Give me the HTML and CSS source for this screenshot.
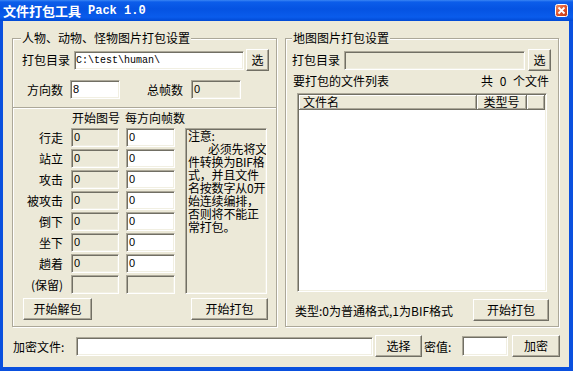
FILE: index.html
```html
<!DOCTYPE html>
<html lang="zh-CN">
<head>
    <meta charset="UTF-8">
    <title>文件打包工具 Pack 1.0</title>
    <link rel="stylesheet" href="styles.css">
</head>
<body>
<div class="window">
    <!-- title bar -->
    <div class="titlebar">
        <span class="title-cn">文件打包工具</span><span class="title-en">Pack 1.0</span>
        <span class="close-btn">
            <svg width="13" height="13" viewBox="0 0 13 13">
                <defs>
                    <linearGradient id="cg" x1="0" y1="0" x2="1" y2="1">
                        <stop offset="0" stop-color="#F0946E"/>
                        <stop offset="0.5" stop-color="#E0532B"/>
                        <stop offset="1" stop-color="#C13A12"/>
                    </linearGradient>
                </defs>
                <rect x="0.5" y="0.5" width="12" height="12" rx="2" fill="url(#cg)" stroke="#fff"/>
                <path d="M3.5 3.5 L9.5 9.5 M9.5 3.5 L3.5 9.5" stroke="#fff" stroke-width="1.8"/>
            </svg>
        </span>
    </div>

    <div class="client">
        <div class="groups">
            <!-- characters / animals / monsters -->
            <div class="group group-left">
                <div class="legend">人物、动物、怪物图片打包设置</div>
                <div class="row row-dir">
                    <span class="label">打包目录</span>
                    <div class="edit edit-path">C:\test\human\</div>
                    <button class="btn btn-pick">选</button>
                </div>
                <div class="row row-count">
                    <span class="label lbl-dirs">方向数</span>
                    <div class="edit edit-num">8</div>
                    <span class="label lbl-total">总帧数</span>
                    <div class="edit edit-num disabled">0</div>
                </div>
                <div class="sep"></div>
                <div class="frames">
                    <span class="head head-start">开始图号</span>
                    <span class="head head-count">每方向帧数</span>

                    <span class="act">行走</span><div class="edit disabled">0</div><div class="edit">0</div>
                    <span class="act">站立</span><div class="edit disabled">0</div><div class="edit">0</div>
                    <span class="act">攻击</span><div class="edit disabled">0</div><div class="edit">0</div>
                    <span class="act">被攻击</span><div class="edit disabled">0</div><div class="edit">0</div>
                    <span class="act">倒下</span><div class="edit disabled">0</div><div class="edit">0</div>
                    <span class="act">坐下</span><div class="edit disabled">0</div><div class="edit">0</div>
                    <span class="act">趟着</span><div class="edit disabled">0</div><div class="edit">0</div>
                    <span class="act">(保留)</span><div class="edit disabled"></div><div class="edit disabled"></div>

                    <p class="note">注意:<br><span class="indent"></span>必须先将文<br>件转换为BIF格<br>式，并且文件<br>名按数字从0开<br>始连续编排，<br>否则将不能正<br>常打包。</p>
                </div>
                <div class="group-buttons">
                    <button class="btn btn-unpack">开始解包</button>
                    <button class="btn btn-pack">开始打包</button>
                </div>
            </div>

            <!-- map pictures -->
            <div class="group group-right">
                <div class="legend">地图图片打包设置</div>
                <div class="row row-dir">
                    <span class="label">打包目录</span>
                    <div class="edit edit-map disabled"></div>
                    <button class="btn btn-pick">选</button>
                </div>
                <div class="list-head">
                    <span>要打包的文件列表</span>
                    <span class="count">共 0 个文件</span>
                </div>
                <div class="listbox">
                    <div class="list-cols">
                        <div class="hcell hcell-name">文件名</div>
                        <div class="hcell hcell-type">类型号</div>
                        <div class="hcell hcell-rest"></div>
                    </div>
                </div>
                <div class="group-foot">
                    <span class="hint">类型:0为普通格式,1为BIF格式</span>
                    <button class="btn btn-pack-map">开始打包</button>
                </div>
            </div>
        </div>

        <!-- encryption -->
        <div class="bottom">
            <span class="label lbl-file">加密文件:</span>
            <div class="edit edit-file"></div>
            <button class="btn btn-choose">选择</button>
            <span class="label lbl-key">密值:</span>
            <div class="edit edit-key"></div>
            <button class="btn btn-encrypt">加密</button>
        </div>
    </div>
</div>
</body>
</html>
```

FILE: styles.css
```css
body {
    margin: 0;
    font-family: "Noto Sans CJK SC", sans-serif;
    font-size: 12px;
    color: #000;
}
.window {
    width: 573px;
    height: 371px;
    background: #0A50DE;
    display: flex;
    flex-direction: column;
}
.titlebar {
    flex: none;
    height: 21px;
    display: flex;
    align-items: center;
    padding: 0 5px 0 3px;
    background: linear-gradient(#3A86F4 0, #0C5DEA 2px, #0553E2 9px, #0A5CEC 17px, #0049D4 21px);
    color: #fff;
    font-weight: bold;
    white-space: nowrap;
}
.title-cn {
    font-size: 13px;
    line-height: 21px;
}
.title-en {
    font-family: "Liberation Mono", monospace;
    font-size: 12px;
    margin-left: 7px;
}
.close-btn {
    margin-left: auto;
    width: 13px;
    height: 13px;
    display: flex;
}
.client {
    flex: 1;
    margin: 0 4px 4px 3px;
    background: #ECE9D8;
    padding: 17px 0 0 9px;
}
.groups {
    display: flex;
    gap: 8px;
}
.group {
    box-sizing: border-box;
    height: 289px;
    border: 1px solid #ACA899;
    box-shadow: inset 1px 1px #fff, 1px 1px #fff;
}
.group-left {
    width: 265px;
}
.group-right {
    width: 274px;
}
.legend {
    width: fit-content;
    margin: -7px 0 0 8px;
    padding: 0 1px;
    line-height: 12px;
    background: #ECE9D8;
    white-space: nowrap;
}
.group-right .legend {
    margin-left: 6px;
}

/* generic controls */
.label {
    white-space: nowrap;
}
.edit {
    box-sizing: border-box;
    height: 19px;
    background: #fff;
    border: 1px solid;
    border-color: #ACA899 #fff #fff #ACA899;
    box-shadow: inset 1px 1px #716F64, inset -1px -1px #F1EFE2;
    padding: 0 2px;
    font-family: "Liberation Sans", sans-serif;
    font-size: 11px;
    line-height: 17px;
    white-space: nowrap;
    overflow: hidden;
}
.edit.disabled {
    background: #ECE9D8;
}
.btn {
    box-sizing: border-box;
    height: 22px;
    padding: 0;
    font-family: "Noto Sans CJK SC", sans-serif;
    font-size: 12px;
    line-height: 20px;
    color: #000;
    background: #ECE9D8;
    border: 1px solid;
    border-color: #fff #716F64 #716F64 #fff;
    box-shadow: inset -1px -1px #ACA899;
}

/* rows */
.row {
    display: flex;
    align-items: flex-start;
}
.row-dir {
    margin-top: 5px;
    height: 22px;
    padding-left: 9px;
}
.group-right .row-dir {
    padding-left: 6px;
}
.row-dir .label {
    width: 48px;
    line-height: 22px;
}
.edit-path {
    width: 170px;
    margin: 2px 0 0 4px;
    padding-left: 1px;
    font-family: "Liberation Mono", monospace;
    font-size: 10px;
}
.edit-map {
    width: 181px;
    margin: 2px 0 0 4px;
}
.btn-pick {
    width: 23px;
    margin-left: 2px;
}
.group-right .btn-pick {
    margin-left: 3px;
}
.row-count {
    margin-top: 9px;
    height: 19px;
    padding-left: 9px;
}
.row-count .label {
    width: 36px;
    line-height: 19px;
}
.lbl-dirs {
    margin-left: 5px;
}
.edit-num {
    width: 50px;
    margin-left: 7px;
}
.lbl-total {
    margin-left: 27px;
}
.lbl-total + .edit-num {
    margin-left: 8px;
}
.sep {
    margin-top: 8px;
    border-top: 1px solid #ACA899;
    border-bottom: 1px solid #fff;
}

/* frame table */
.frames {
    margin-top: 3px;
    display: grid;
    grid-template-columns: 51px 48px 49px 85px;
    grid-template-rows: 14px repeat(8, 19px);
    column-gap: 7px;
    row-gap: 2px;
}
.head {
    line-height: 12px;
    white-space: nowrap;
}
.head-start {
    grid-column: 2;
    margin-left: 1px;
}
.head-count {
    grid-column: 3;
    margin-left: -1px;
}
.act {
    grid-column: 1;
    text-align: right;
    padding-right: 1px;
    line-height: 19px;
    white-space: nowrap;
}
.note {
    grid-column: 4;
    grid-row: 2 / 10;
    margin: 0 0 0 3px;
    box-sizing: border-box;
    border: 1px solid;
    border-color: #ACA899 #fff #fff #ACA899;
    box-shadow: inset 1px 1px #716F64, inset -1px -1px #F1EFE2;
    padding: 0 1px 0 2px;
    line-height: 13px;
    letter-spacing: -0.2px;
    white-space: nowrap;
    overflow: hidden;
}
.indent {
    display: inline-block;
    width: 20px;
}
.group-buttons {
    display: flex;
    margin-top: 4px;
    padding-left: 10px;
}
.btn-unpack {
    width: 69px;
}
.btn-pack {
    width: 77px;
    margin-left: 99px;
}

/* map list */
.list-head {
    display: flex;
    justify-content: space-between;
    margin-top: 4px;
    padding: 0 9px 0 7px;
    line-height: 12px;
}
.count {
    word-spacing: 4px;
}
.listbox {
    box-sizing: border-box;
    width: 250px;
    height: 199px;
    margin: 6px 0 0 11px;
    padding: 1px;
    background: #fff;
    border: 1px solid;
    border-color: #ACA899 #fff #fff #ACA899;
    box-shadow: inset 1px 1px #716F64, inset -1px -1px #F1EFE2;
}
.list-cols {
    display: flex;
    height: 15px;
}
.hcell {
    box-sizing: border-box;
    height: 15px;
    background: #ECE9D8;
    border-right: 1px solid #716F64;
    border-bottom: 1px solid #716F64;
    box-shadow: inset 1px 1px #fff, inset -1px -1px #ACA899;
    line-height: 13px;
    white-space: nowrap;
}
.hcell-name {
    width: 178px;
    padding-left: 4px;
}
.hcell-type {
    width: 50px;
    text-align: center;
}
.hcell-rest {
    flex: 1;
}
.group-foot {
    display: flex;
    align-items: center;
    height: 22px;
    margin-top: 7px;
    padding: 0 9px 0 9px;
}
.hint {
    white-space: nowrap;
}
.btn-pack-map {
    width: 76px;
    margin-left: auto;
}

/* encryption row */
.bottom {
    display: flex;
    align-items: center;
    height: 22px;
    margin-top: 8px;
    padding-left: 1px;
}
.lbl-file {
    width: 63px;
}
.edit-file {
    width: 297px;
}
.btn-choose {
    width: 47px;
    margin-left: 2px;
}
.lbl-key {
    width: 38px;
    margin-left: 2px;
}
.edit-key {
    width: 46px;
    height: 20px;
}
.btn-encrypt {
    width: 48px;
    margin-left: 4px;
}
```
